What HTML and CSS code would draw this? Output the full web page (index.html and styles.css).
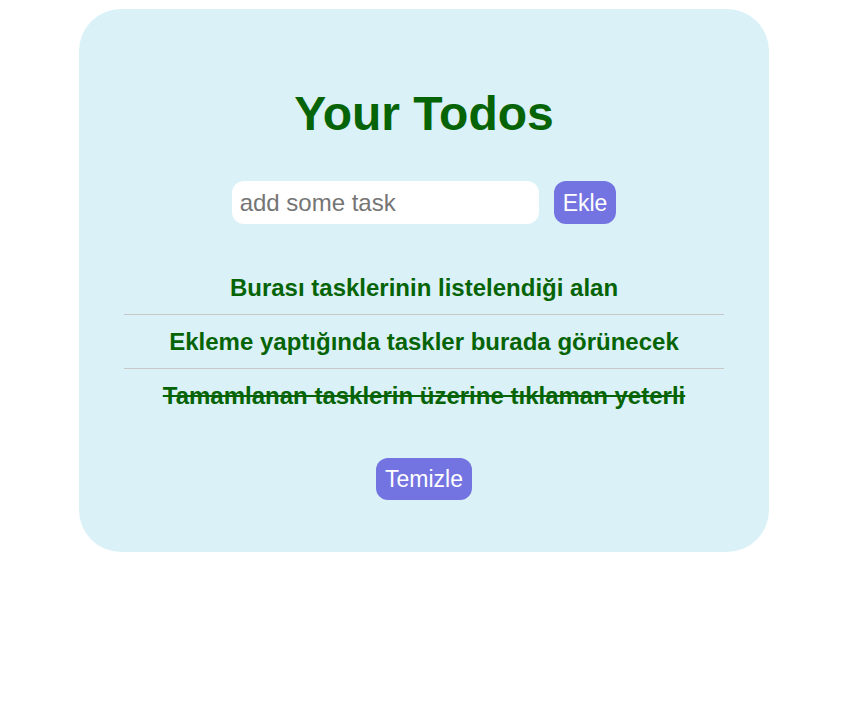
FILE: index.html
```html
<!DOCTYPE html>
<html lang="tr">
<head>
<meta charset="utf-8">
<title>Your Todos</title>
<link rel="stylesheet" href="styles.css">
</head>
<body>
<main class="card">
  <h1 class="title">Your Todos</h1>
  <form class="add-row">
    <input class="task-input" type="text" placeholder="add some task">
    <button class="btn" type="button">Ekle</button>
  </form>
  <ul class="list">
    <li class="item">Burası tasklerinin listelendiği alan</li>
    <li class="item">Ekleme yaptığında taskler burada görünecek</li>
    <li class="item done">Tamamlanan tasklerin üzerine tıklaman yeterli</li>
  </ul>
  <div class="actions">
    <button class="btn" type="button">Temizle</button>
  </div>
</main>
</body>
</html>
```

FILE: styles.css
```css
html, body {
  margin: 0;
  padding: 0;
  background: #ffffff;
}

body {
  font-family: "Liberation Sans", Arial, sans-serif;
  padding-top: 9px;
}

.card {
  width: 690px;
  box-sizing: border-box;
  margin-left: 79px;
  background: #d9f1f7;
  border-radius: 42px;
  padding: 77px 45px 52px;
  display: flex;
  flex-direction: column;
  align-items: center;
}

.title {
  margin: 0;
  font-size: 48px;
  line-height: 55px;
  font-weight: bold;
  color: #066406;
}

.add-row {
  margin: 40px 0 0;
  display: flex;
  gap: 15px;
  align-items: center;
}

.task-input {
  width: 307px;
  height: 43px;
  box-sizing: border-box;
  border: none;
  outline: none;
  border-radius: 12px;
  background: #ffffff;
  padding: 0 8px;
  font-family: "Liberation Sans", Arial, sans-serif;
  font-size: 24px;
  color: #333;
}

.task-input::placeholder {
  color: #757575;
}

.btn {
  border: none;
  border-radius: 12px;
  background: #7373e1;
  color: #ffffff;
  font-family: "Liberation Sans", Arial, sans-serif;
  font-size: 23px;
  line-height: 26px;
  padding: 8px 9px;
  cursor: pointer;
}

.add-row .btn {
  height: 43px;
}

.list {
  list-style: none;
  margin: 37px 0 0;
  padding: 0;
  width: 600px;
}

.item {
  padding: 13px 0;
  font-size: 24px;
  line-height: 27px;
  font-weight: bold;
  color: #066406;
  text-align: center;
  border-bottom: 1px solid #c8c8c8;
}

.item:last-child {
  border-bottom: none;
}

.item.done {
  text-decoration: line-through;
}

.actions {
  margin-top: 36px;
}

.actions .btn {
  height: 42px;
}
```
